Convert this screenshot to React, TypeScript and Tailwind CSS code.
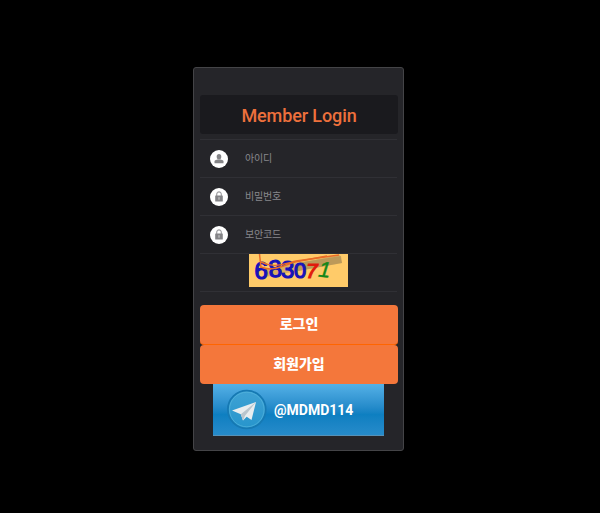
import type { ReactNode } from "react";

function UserGlyph() {
  return (
    <svg viewBox="0 0 18 18" className="h-[18px] w-[18px]">
      <circle cx="9" cy="9" r="9" fill="#fff" />
      <ellipse cx="9" cy="6.8" rx="2.3" ry="2.7" fill="#848487" />
      <path d="M4.5 13.3v-1.8c0-1 1-1.5 2.7-2h3.6c1.7.5 2.7 1 2.7 2v1.8z" fill="#848487" />
    </svg>
  );
}

function LockGlyph() {
  return (
    <svg viewBox="0 0 18 18" className="h-[18px] w-[18px]">
      <circle cx="9" cy="9" r="9" fill="#fff" />
      <path d="M6.7 8V6.2a2.3 2.3 0 0 1 4.6 0V8" fill="none" stroke="#a0a0a3" strokeWidth="1.2" />
      <rect x="5.2" y="7.5" width="7.6" height="6" rx=".5" fill="#848487" />
      <path d="M9 9.2v2.5" stroke="#d0d0d0" strokeWidth="1" />
    </svg>
  );
}

function Field({ icon, label }: { icon: ReactNode; label: string }) {
  return (
    <label className="flex h-[38px] items-center border-t border-[#303035] pl-[10px]">
      {icon}
      <span className="ml-[17px] pt-px text-[10px] leading-none tracking-[-0.2px] text-[#88888c]">{label}</span>
    </label>
  );
}

function Captcha() {
  return (
    <svg viewBox="0 0 99 33" className="h-[33px] w-[99px]">
      <rect width="99" height="33" fill="#ffcb69" />
      <path d="m15 15 76-14 2 8-77 14z" fill="#a98b56" opacity=".45" />
      <path d="m48 9 44-7 1 7-44 8z" fill="#a08351" opacity=".5" />
      <g fontFamily="Liberation Sans, sans-serif" fontWeight="400" fontSize="24" strokeWidth="1.2">
        <text x="5.5" y="25" fill="#1712b8" stroke="#1712b8">6</text>
        <text x="19.5" y="23" fill="#1712b8" stroke="#1712b8" transform="rotate(-5 26 15)">8</text>
        <text x="32" y="24" fill="#1712b8" stroke="#1712b8">3</text>
        <text x="45" y="24" fill="#1712b8" stroke="#1712b8" fontSize="22">0</text>
        <text x="57" y="24" fill="#e11b0c" stroke="#e11b0c" fontSize="21" fontStyle="italic">7</text>
        <text x="69.5" y="23" fill="#168719" stroke="#168719" strokeWidth=".4" fontSize="22" fontStyle="italic" transform="rotate(6 75 16)">1</text>
      </g>
      <path d="M10.5 0 12 14" fill="none" stroke="#e96c28" strokeWidth="1.5" />
      <path d="M12 8 C24 14 31 11 47 7L90 1" fill="none" stroke="#e96c28" strokeWidth="1.4" />
      <path d="M12 13C23 18 33 12 46 8L78 2" fill="none" stroke="#e96c28" strokeWidth="1.5" />
    </svg>
  );
}

function PaperPlane() {
  return (
    <svg viewBox="0 0 42 42" className="h-[42px] w-[42px]">
      <defs>
        <linearGradient id="disc" x1="0" y1="0" x2="0" y2="1">
          <stop offset="0" stopColor="#3fa2d4" />
          <stop offset="1" stopColor="#2795cc" />
        </linearGradient>
      </defs>
      <circle cx="20.8" cy="20.5" r="18.9" fill="url(#disc)" stroke="#1679b3" strokeWidth="1.8" />
      <circle cx="20.8" cy="20.5" r="17.3" fill="none" stroke="#55b4dc" strokeWidth=".7" />
      <path d="M6 21.5 30 13l-4.5 18-4.8-3.2-3.7 3.7-2.2-6.3z" fill="#e9edef" />
      <path d="M14.8 25.2 30 13 19 26.8l-2 4.7z" fill="#b9c5cd" />
    </svg>
  );
}

export default function App() {
  const button =
    "flex h-[39.5px] w-full items-center justify-center rounded-[4px] bg-[#f4773b] text-[14px] font-black leading-none text-white";

  return (
    <main className="flex h-[513px] justify-center bg-black pr-[3px] pt-[67px] font-['Roboto','Noto_Sans_CJK_KR',sans-serif]">
      <section className="h-[384px] w-[211px] rounded-[3px] border border-[#444447] bg-[#252529] px-[6px] pt-[27px]">
        <h1 className="flex h-[39px] w-[198px] items-center justify-center rounded-[3px] bg-[#1a1a1e] pt-[2px] text-[18px] font-medium tracking-[-0.1px] text-[#ed703c]">
          Member Login
        </h1>
        <form className="mt-[5px]">
          <Field icon={<UserGlyph />} label="아이디" />
          <Field icon={<LockGlyph />} label="비밀번호" />
          <Field icon={<LockGlyph />} label="보안코드" />
          <div className="flex h-[39px] justify-center border-y border-[#303035]">
            <Captcha />
          </div>
          <div className="mt-[13px] w-[198px]">
            <button type="button" className={`${button} border-b border-[#ff6500]`}>로그인</button>
            <button type="button" className={button}>회원가입</button>
          </div>
        </form>
        <a className="ml-[13px] flex h-[52px] w-[171px] items-center border-b border-[#5691b7] bg-linear-to-b from-[#54b1e7] via-[#0d7fc1] via-60% to-[#268bca] pl-[13px] text-white">
          <PaperPlane />
          <span className="ml-[6px] text-[14px] font-bold leading-none">@MDMD114</span>
        </a>
      </section>
    </main>
  );
}
